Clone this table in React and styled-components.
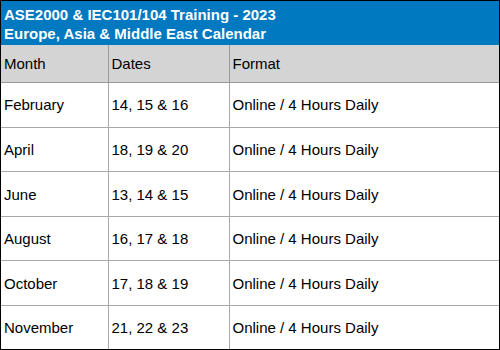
import React from "react";
import styled, { createGlobalStyle } from "styled-components";

const GlobalStyle = createGlobalStyle`
  html, body {
    margin: 0;
    padding: 0;
    background: #fff;
  }
  body {
    font-family: "Liberation Sans", Arial, sans-serif;
  }
`;

const sessions = [
  { month: "February", dates: "14, 15 & 16", format: "Online / 4 Hours Daily" },
  { month: "April", dates: "18, 19 & 20", format: "Online / 4 Hours Daily" },
  { month: "June", dates: "13, 14 & 15", format: "Online / 4 Hours Daily" },
  { month: "August", dates: "16, 17 & 18", format: "Online / 4 Hours Daily" },
  { month: "October", dates: "17, 18 & 19", format: "Online / 4 Hours Daily" },
  { month: "November", dates: "21, 22 & 23", format: "Online / 4 Hours Daily" }
];

const App = () => (
  <>
    <GlobalStyle />
    <Frame>
      <Title>
        ASE2000 &amp; IEC101/104 Training - 2023
        <br />
        Europe, Asia &amp; Middle East Calendar
      </Title>
      <Table>
        <colgroup>
          <col style={{ width: 107 }} />
          <col style={{ width: 121 }} />
          <col />
        </colgroup>
        <thead>
          <tr>
            <Th>Month</Th>
            <Th>Dates</Th>
            <Th>Format</Th>
          </tr>
        </thead>
        <tbody>
          {sessions.map(item => (
            <Row key={item.month}>
              <Td>{item.month}</Td>
              <Td>{item.dates}</Td>
              <Td>{item.format}</Td>
            </Row>
          ))}
        </tbody>
      </Table>
    </Frame>
  </>
);

export default App;

const Frame = styled.div`
  width: 500px;
  height: 350px;
  box-sizing: border-box;
  border: 1px solid #000;
  display: flex;
  flex-direction: column;
  overflow: hidden;
`;

const Title = styled.div`
  height: 44px;
  box-sizing: border-box;
  background: #0079c1;
  color: #fff;
  font-weight: bold;
  font-size: 15px;
  line-height: 19px;
  padding: 4px 0 0 3px;
`;

const Table = styled.table`
  flex: 1;
  width: 100%;
  border-collapse: collapse;
  table-layout: fixed;
  font-size: 15px;
  color: #000;
`;

const Th = styled.th`
  height: 37px;
  background: #d4d4d4;
  font-weight: normal;
  text-align: left;
  padding: 0 0 0 3px;
  border-bottom: 1px solid #999;
  border-left: 1px solid #999;

  &:first-child {
    border-left: none;
  }
`;

const Row = styled.tr`
  & + & td {
    border-top: 1px solid #a8a8a8;
  }
`;

const Td = styled.td`
  padding: 0 0 0 3px;
  border-left: 1px solid #a8a8a8;
  vertical-align: middle;

  &:first-child {
    border-left: none;
  }
`;
